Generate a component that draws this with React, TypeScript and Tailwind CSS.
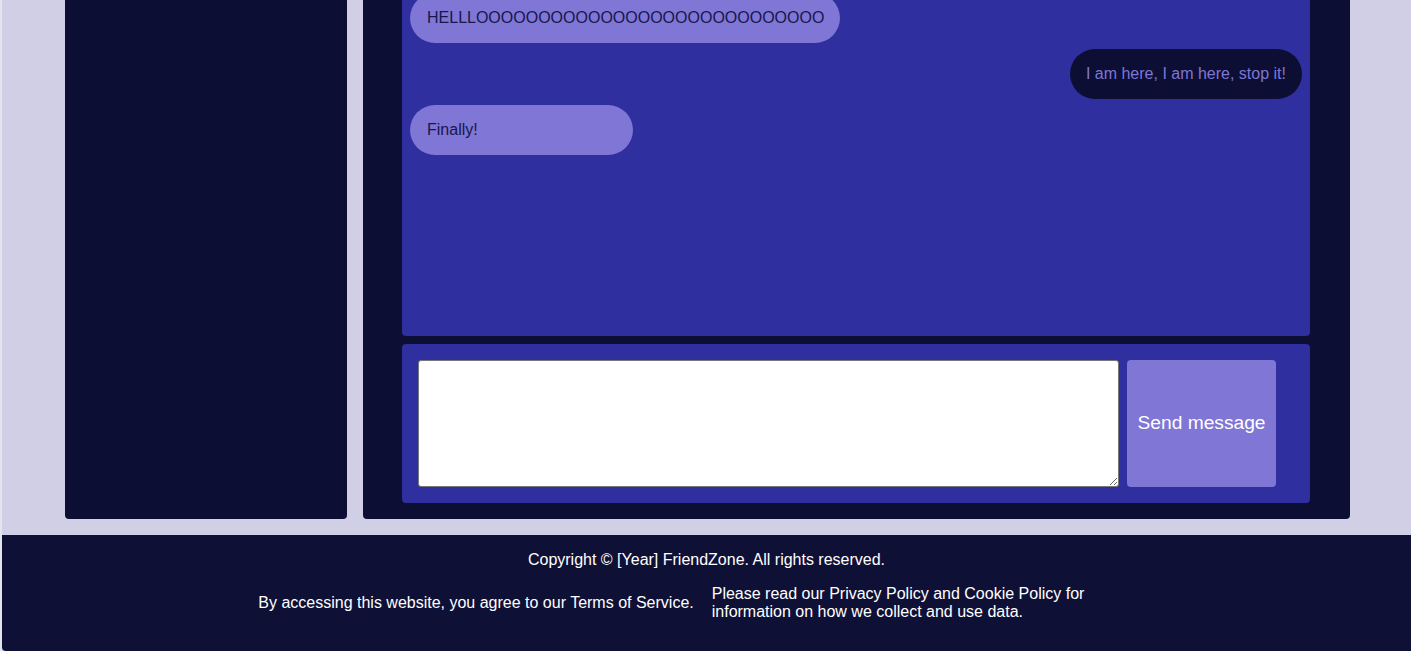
import React from "react";

type Msg = { text: string; mine: boolean };

const messages: Msg[] = [
  { text: "HELLLOOOOOOOOOOOOOOOOOOOOOOOOOOOO", mine: false },
  { text: "I am here, I am here, stop it!", mine: true },
  { text: "Finally!", mine: false },
];

export default function App() {
  return (
    <div
      className="w-[1411px] h-[651px] overflow-hidden bg-[#d0cfe5] border-l-2 border-[#e4e4ec] text-base"
      style={{ fontFamily: '"Liberation Sans", Arial, sans-serif' }}
    >
      <div className="flex gap-4 pl-[63px] h-[519px]">
        <aside className="w-[282px] h-full bg-[#0c0e33] rounded-b-[4px]" />
        <main className="w-[987px] h-full bg-[#0c0e33] rounded-b-[4px] pl-[39px] pr-[40px] pb-4 flex flex-col gap-2">
          <section className="flex-1 bg-[#2f2f9f] rounded-b-[4px] overflow-hidden px-2">
            <div className="flex flex-col gap-[6px] -mt-[7px]">
              {messages.map((m, i) => (
                <div key={i} className={m.mine ? "flex justify-end" : "flex justify-start"}>
                  <div
                    className={
                      m.mine
                        ? "min-w-[25%] h-[50px] px-4 flex items-center rounded-full bg-[#0c0e33] text-[#7f76d5] leading-[18px]"
                        : "min-w-[25%] h-[50px] pl-[17px] pr-4 flex items-center rounded-full bg-[#7f76d5] text-[#17174d] leading-[18px]"
                    }
                  >
                    {m.text}
                  </div>
                </div>
              ))}
            </div>
          </section>
          <section className="h-[159px] bg-[#2f2f9f] rounded-[4px] p-4 flex gap-2">
            <textarea className="w-[701px] h-[127px] bg-white border border-[#767676] rounded-[3px] resize" />
            <button className="w-[149px] h-[127px] bg-[#7f76d5] rounded-[4px] text-white text-[19.2px]">
              Send message
            </button>
          </section>
        </main>
      </div>
      <footer className="mt-4 h-[116px] bg-[#0f1036] rounded-bl-[4px] text-white pt-4 flex flex-col items-center gap-4 leading-[18px]">
        <p>Copyright © [Year] FriendZone. All rights reserved.</p>
        <div className="flex items-center justify-center gap-[18px] w-full">
          <p>By accessing this website, you agree to our Terms of Service.</p>
          <p className="w-[443px]">
            Please read our Privacy Policy and Cookie Policy for information on how we collect and use data.
          </p>
        </div>
      </footer>
    </div>
  );
}
